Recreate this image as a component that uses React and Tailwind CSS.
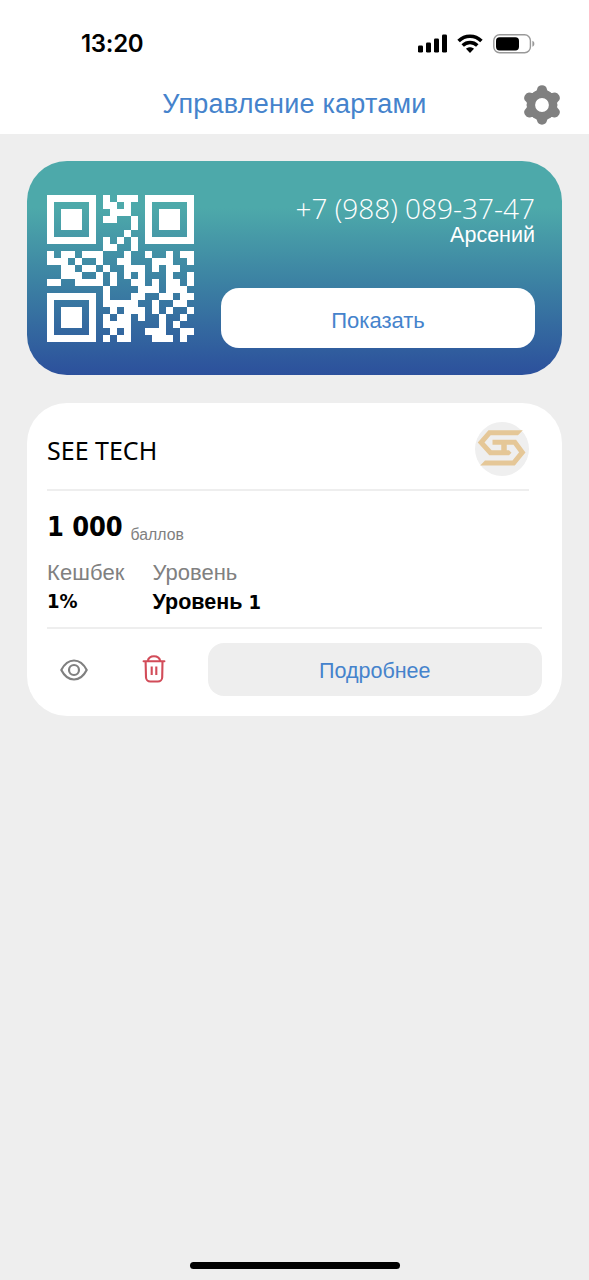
const QR_ROWS = [
  '111111101011101111111',
  '100000101101001000001',
  '101110100111001011101',
  '101110101100101011101',
  '101110100000101011101',
  '100000100001001000001',
  '111111101010101111111',
  '000000001100100000000',
  '101101110001001001011',
  '111010010011000111001',
  '001101101001110101100',
  '001110010101010001001',
  '110011110100110101101',
  '000000001000011101110',
  '111111101000110011011',
  '100000101111100100110',
  '101110100101110101001',
  '101110101011010010010',
  '101110101111000010100',
  '100000100101001110011',
  '111111101011000111010',
];

function QrCode() {
  const d = QR_ROWS.flatMap((row, y) =>
    [...row].map((bit, x) => (bit === '1' ? `M${x} ${y}h1v1h-1z` : ''))
  ).join('');
  return (
    <svg className="h-[147px] w-[147px] shrink-0" viewBox="0 0 21 21" shapeRendering="crispEdges">
      <path d={d} fill="#fff" />
    </svg>
  );
}

function SignalIcon() {
  return (
    <svg className="h-[19px] w-[30px]" viewBox="0 0 30 19">
      <rect x="0" y="11.4" width="5" height="7.2" rx="1.4" />
      <rect x="8" y="8.4" width="5" height="10.2" rx="1.4" />
      <rect x="16" y="4.4" width="5" height="14.2" rx="1.4" />
      <rect x="24" y="0.4" width="5" height="18.2" rx="1.4" />
    </svg>
  );
}

function WifiIcon() {
  return (
    <svg className="h-[19px] w-[26px]" viewBox="0 0 26 19" fill="none" stroke="#000" strokeWidth="3.5">
      <path d="M1.6 7C8 .5 18 .5 24.4 7" />
      <path d="M5.7 11.4c4.2-4 10.4-4 14.6 0" />
      <path d="M9 14.800c2.300-2 5.700-2 8 0L13 18.900z" fill="#000" stroke="none" />
    </svg>
  );
}

function BatteryIcon() {
  return (
    <svg className="h-5 w-[42px]" viewBox="0 0 42 20">
      <rect x="0.8" y="0.8" width="36.6" height="18" rx="5.8" fill="none" stroke="#999" strokeWidth="1.4" />
      <rect x="3" y="3.2" width="23" height="13.2" rx="3.6" />
      <path d="M39.4 6.8c2.6 1.2 2.6 4.8 0 6z" fill="#999" />
    </svg>
  );
}

function GearIcon() {
  return (
    <svg className="h-[42px] w-[42px]" viewBox="-21 -21 42 42" fill="#808080">
      <circle r="11.1" fill="none" stroke="#808080" strokeWidth="8.4" />
      {[0, 60, 120, 180, 240, 300].map((a) => (
        <path key={a} transform={`rotate(${a})`} d="M-8.6-12.800C-6.500-13-5.400-13.800-5-15.600A5.100 5.100 0 0 1 5-15.600C5.400-13.800 6.500-13 8.600-12.800L4-9h-8z" />
      ))}
    </svg>
  );
}

function BrandLogo() {
  return (
    <svg className="h-[54px] w-[54px]" viewBox="0 0 54 54">
      <circle cx="27" cy="27" r="27" fill="#efefef" />
      <g fill="none" stroke="#e5c797" strokeWidth="5">
        <path d="M43 10.700H14.600L6.100 20.500L15.400 30.800H34" />
        <path d="M10 41H38.600L47.300 30.400L39.800 20.200H17.500" />
        <path d="M29 20.200V30.800" strokeWidth="5.500" />
      </g>
      <path d="M43 8.200h4.800L43 13.200zM10 43.500H5.200L10 38.500zM34 28.300l2.500 2.500L34 33.300z" fill="#e5c797" />
    </svg>
  );
}

function EyeIcon() {
  return (
    <svg className="h-[22px] w-7" viewBox="0 0 28 22" fill="none" stroke="#808080" strokeWidth="2.2">
      <path d="M1.300 11C4.500 4.800 9 1.500 14 1.500S23.500 4.800 26.700 11C23.500 17.200 19 20.500 14 20.500S4.500 17.200 1.300 11z" strokeLinejoin="round" />
      <circle cx="14" cy="11" r="5" />
    </svg>
  );
}

function TrashIcon() {
  return (
    <svg className="h-7 w-6" viewBox="0 0 24 28" fill="none" stroke="#d24c59" strokeWidth="2.1">
      <path d="M1.600 6.200h20.800" strokeLinecap="round" />
      <path d="M5.800 6C6.400 2.800 8.600 1.300 12 1.300S17.600 2.800 18.200 6" />
      <path d="M3.600 6.200L4 22.200a4.300 4.300 0 0 0 4.300 4.300h7.600a4.300 4.300 0 0 0 4.300-4.300L20.500 6.200" />
      <path d="M9.700 11.500v8.600M14.300 11.500v8.600" />
    </svg>
  );
}

export default function App() {
  return (
    <div className="flex h-[1280px] w-[589px] flex-col overflow-hidden bg-[#eee] font-['Liberation_Sans',sans-serif] text-black">
      <header className="h-[134px] shrink-0 bg-white">
        <div className="flex h-[74px] items-center justify-between pt-[13px] pr-[54px] pl-[81px]">
          <time className="font-['Inter',sans-serif] text-[24px] leading-[30px] font-semibold tracking-[-0.3px]">13:20</time>
          <div className="flex items-center">
            <SignalIcon />
            <div className="ml-[9px] flex"><WifiIcon /></div>
            <div className="ml-[10px] flex"><BatteryIcon /></div>
          </div>
        </div>
        <div className="grid h-[60px] grid-cols-[68px_1fr_68px] items-center pr-[26px] pl-[26px]">
          <span />
          <h1 className="text-center text-[27px] leading-[30px] tracking-[0.23px] whitespace-nowrap text-[#4583cc]">Управление картами</h1>
          <div className="flex justify-end pt-0.5"><GearIcon /></div>
        </div>
      </header>

      <main className="flex flex-col gap-7 px-[27px] pt-[27px]">
        <section className="flex h-[214px] gap-[27px] rounded-[40px] bg-[linear-gradient(180deg,#4da9aa_0%,#4da9aa_22%,#3c82a3_56%,#2c509c_100%)] pt-[34px] pr-[27px] pl-5">
          <QrCode />
          <div className="flex flex-1 flex-col text-right text-white">
            <p className="font-['Open_Sans',sans-serif] text-[28px] leading-[27px] font-[350] whitespace-nowrap">+7 (988) 089-37-47</p>
            <p className="text-[21.5px] leading-[26px]">Арсений</p>
            <button className="mt-10 h-[60px] rounded-[18px] bg-white pt-[5px] text-[22px] text-[#4583cc]">Показать</button>
          </div>
        </section>

        <section className="h-[313px] rounded-[40px] bg-white px-5 pt-[19px]">
          <div className="mr-[13px] flex h-[69px] items-start justify-between border-b-2 border-[#eee]">
            <h2 className="pt-[13px] font-['Noto_Sans',sans-serif] text-[25px] leading-[30px]">SEE TECH</h2>
            <BrandLogo />
          </div>
          <div className="flex h-[68px] gap-2 pt-[19px]">
            <strong className="font-['DejaVu_Sans_Condensed','DejaVu_Sans',sans-serif] text-[27px] leading-[34px] font-bold tracking-[-0.1px]">1 000</strong>
            <span className="pt-[11px] text-[15.8px] leading-7 text-[#808080]">баллов</span>
          </div>
          <dl className="flex h-[68px] gap-7 text-[22px] leading-7">
            <div>
              <dt className="tracking-[0.1px] text-[#808080]">Кешбек</dt>
              <dd className="font-['DejaVu_Sans_Condensed','DejaVu_Sans',sans-serif] text-[20px] leading-[29px] font-bold">1%</dd>
            </div>
            <div>
              <dt className="text-[#808080]">Уровень</dt>
              <dd className="text-[21.5px] leading-[30px] font-bold">Уровень <span className="font-['DejaVu_Sans_Condensed','DejaVu_Sans',sans-serif] text-[20px]">1</span></dd>
            </div>
          </dl>
          <div className="flex items-center border-t-2 border-[#eee] pt-[14px]">
            <button className="ml-[13px] flex"><EyeIcon /></button>
            <button className="ml-[54px] flex pb-0.5"><TrashIcon /></button>
            <button className="ml-[41.5px] h-[53px] flex-1 rounded-2xl bg-[#eee] pt-[4px] text-[21.5px] text-[#4583cc]">Подробнее</button>
          </div>
        </section>
      </main>

      <div className="mt-auto mb-[11px] h-[7px] w-[210px] self-center rounded-full bg-black" />
    </div>
  );
}
